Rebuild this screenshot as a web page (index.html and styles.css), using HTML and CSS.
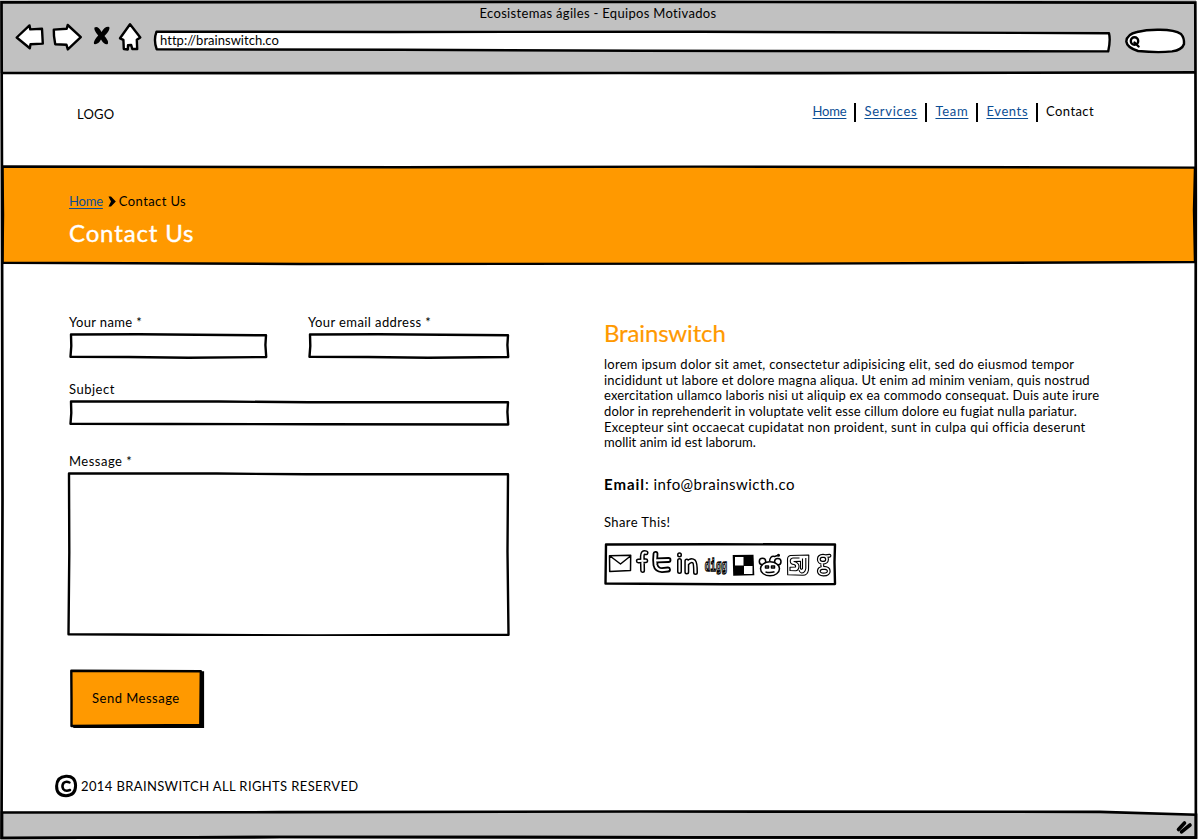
FILE: index.html
```
<!DOCTYPE html>
<html lang="es">
<head>
<meta charset="utf-8">
<title>Ecosistemas ágiles - Equipos Motivados</title>
<link rel="stylesheet" href="styles.css">
</head>
<body>
<div class="window">
  <header class="chrome">
    <div class="chrome-title"><span>Ecosistemas ágiles - Equipos Motivados</span></div>
    <div class="toolbar">
      <svg class="ink tool-back" width="30" height="30" viewBox="15 22 30 30"><path d="M16.7 37.5 29.5 25.4 30.3 29.4 42 28.7 42.8 43.6 30.5 44.2 29.8 48.2Z"/></svg>
      <svg class="ink tool-forward" width="32" height="30" viewBox="51 22 32 30"><path d="M53.8 29.6 66.7 28.8 67.7 25 80.8 37.2 67.8 49.4 66.5 44.8 55.2 44.2 54 36Z"/></svg>
      <svg class="tool-stop" width="20" height="30" viewBox="92 22 20 30"><path d="M94.500 27.500Q98 25.500 101.500 32 105 26 109.300 27 110.500 30 104.500 36 109 41 107.800 44 104.500 45.500 101 39.500 98 45 94 44 93 41 98.200 35.500 93.500 30 94.500 27.500Z"/></svg>
      <svg class="ink tool-home" width="26" height="30" viewBox="117 22 26 30"><path d="M120 38.3 130 24.2 140.3 37.4 136.8 39.8 137.2 49 132.3 49 131.2 45 128 45.3 127.8 49.5 123.8 49 123.4 39.8Z"/></svg>
      <div class="url">
        <svg class="ink frame" viewBox="153 29 960 24" preserveAspectRatio="none"><path d="M156.5 31.6 390 32 700 31.7 1109 33.2Q1110.700 40 1108.200 51.4L640 50.800 400 49.800 156.700 49.400Q153.300 40 156.500 31.600Z"/></svg>
        <span>http://brainswitch.co</span>
      </div>
      <svg class="ink tool-search" width="64" height="30" viewBox="1123 26 64 30"><path d="M1137 32Q1147 29.500 1160 29.800 1175 30 1181 34 1184.500 38 1184 44 1182 50 1172 51.400 1158 53 1138 51 1127 47.500 1126.300 41.500 1127 34 1137 32Z"/><circle cx="1134.500" cy="41" r="3.700"/><path d="M1134.500 42.500 1138.600 46.500" stroke-width="2.500"/></svg>
    </div>
  </header>

  <div class="site-head">
    <div class="logo"><span>LOGO</span></div>
    <nav class="nav">
      <a class="link" href="#">Home</a><i></i><a class="link services" href="#">Services</a><i></i><a class="link team" href="#">Team</a><i></i><a class="link events" href="#">Events</a><i></i><span>Contact</span>
    </nav>
  </div>

  <section class="banner">
    <svg class="ink frame" viewBox="0 164 1198 102" preserveAspectRatio="none"><path class="orange" d="M2.500 166.500 400 167.300 700 166.600 1195 167.600 1194 210 1195 262 800 263.600 300 264 2.500 262.800 3 215Z"/></svg>
    <div class="crumbs"><a class="link" href="#">Home</a><svg width="8" height="11" viewBox="0 0 8 11"><path d="M0.500 0.500 3 0.500 7.800 5.500 3 10.500 0.500 10.500 3 5.500Z"/></svg><span>Contact Us</span></div>
    <h1><span>Contact Us</span></h1>
  </section>

  <main class="content">
    <form class="form">
      <div class="pair">
        <div class="field name">
          <label><span>Your name *</span></label>
          <div class="box"><svg class="ink frame" viewBox="0 0 200 26" preserveAspectRatio="none"><path d="M2 1.500 70 1.300 198 2.300 197.400 12 198.200 24 120 24.700 60 24 1.500 23.700 2.300 13Z"/></svg></div>
        </div>
        <div class="field email">
          <label><span>Your email address *</span></label>
          <div class="box"><svg class="ink frame" viewBox="0 0 202 26" preserveAspectRatio="none"><path d="M2 1.500 70 1.300 200 2.300 199.400 12 200.200 24 120 24.700 60 24 1.500 23.700 2.300 13Z"/></svg></div>
        </div>
      </div>
      <div class="field subject">
        <label><span>Subject</span></label>
        <div class="box"><svg class="ink frame" viewBox="0 0 442 26" preserveAspectRatio="none"><path d="M2 1.500 150 1.500 240 2.300 440 2.300 439.400 12 440.200 24.500 250 24.200 100 24 1.500 23.700 2.300 13Z"/></svg></div>
      </div>
      <div class="field message">
        <label><span>Message *</span></label>
        <div class="box"><svg class="ink frame" viewBox="0 0 444 164" preserveAspectRatio="none"><path d="M2 1.500 150 1.500 240 2.300 442 2.300 441.500 80 442.500 162.700 250 163.400 100 162.800 1.500 162.300 2.300 80Z"/></svg></div>
      </div>
      <div class="send">
        <svg class="ink frame" viewBox="68 668 138 62" preserveAspectRatio="none"><path class="shadow" d="M74.500 672.500H202.900V726.900H74.500Z"/><path class="orange" d="M71.300 670.700 200.800 671.300 200.300 725 71.500 726 71.500 700Z"/></svg>
        <span>Send Message</span>
      </div>
    </form>

    <section class="about">
      <h2><span>Brainswitch</span></h2>
      <p class="lorem"><span>lorem ipsum dolor sit amet, consectetur adipisicing elit, sed do eiusmod tempor</span><br><span>incididunt ut labore et dolore magna aliqua. Ut enim ad minim veniam, quis nostrud</span><br><span>exercitation ullamco laboris nisi ut aliquip ex ea commodo consequat. Duis aute irure</span><br><span>dolor in reprehenderit in voluptate velit esse cillum dolore eu fugiat nulla pariatur.</span><br><span>Excepteur sint occaecat cupidatat non proident, sunt in culpa qui officia deserunt</span><br><span>mollit anim id est laborum.</span></p>
      <p class="mail"><b>Email</b><span>: info@brainswicth.co</span></p>
      <p class="share-label"><span>Share This!</span></p>
      <div class="share">
        <svg class="ink frame" viewBox="0 0 234 44" preserveAspectRatio="none"><path d="M3 2.500 110 2.200 232 2.500 231.500 20 232 42 120 42.300 2.500 41.500Z"/></svg>
        <svg class="thin" width="27" height="30" viewBox="607 549 27 30"><path d="M609.500 555.800 630.700 555.300 630.500 570.500 609.700 571.500Z M610 556 620.500 564 630.500 556"/></svg>
        <svg class="tube" width="16" height="30" viewBox="634 549 16 30"><g id="f"><path d="M646 552.800Q642.300 551.500 642.300 556.500L642.600 570.500M638.300 561 645.800 560.700"/></g><use href="#f" class="core"/></svg>
        <svg class="tube heavy" width="25" height="30" viewBox="650 549 25 30"><g id="t"><path d="M655.500 553.800Q654.800 560 655.500 565 656.500 569.800 662 570.200L668 569.500M657 560.300 668.500 560"/></g><use href="#t" class="core"/></svg>
        <svg class="tube" width="27" height="30" viewBox="675 549 27 30"><g id="in"><path d="M679.500 554.800V555M679.500 560.500V571.500M686.800 572V561M687 563.500Q691 559 694 561.500 695.500 563 695.500 572.500"/></g><use href="#in" class="core"/></svg>
        <svg class="digg" width="29" height="30" viewBox="702 549 29 30"><text transform="translate(704.700 571) scale(1 1.700)">digg</text></svg>
        <svg width="26" height="30" viewBox="731 549 26 30"><path d="M732.700 555 753.500 554.800 754.300 575.200 733.200 575.800Z"/><path d="M735 557H743.500V565.500H735ZM744 566H752.500V574H744Z" fill="#fff"/></svg>
        <svg class="thin" width="28" height="30" viewBox="757 549 28 30"><circle cx="762.500" cy="561.500" r="3.200"/><circle cx="777.800" cy="561.800" r="3.200"/><ellipse cx="770" cy="568.800" rx="9.500" ry="7"/><path d="M769.500 561.500Q770 555.500 774.500 556.500L777.500 555.500M765.500 566H768.500V568H765.500ZM771.500 566H774.500V568H771.500ZM765.500 572Q770 573.200 774.500 571.800"/><circle cx="778.500" cy="555.200" r="0.800"/></svg>
        <svg class="thin su" width="29" height="30" viewBox="785 549 29 30"><path d="M790.500 555.500 808.800 555 808.500 570Q807.500 575.300 803 575.300L787.700 574.800 787.500 559.500Q787.500 556 790.500 555.500Z"/><path d="M799.500 558H793Q790 558.500 790.300 561.500 790.500 564.300 794 564.500 796 565 795.500 567L790 567.200V570.500L796 570.800Q799 570 799 566 798.500 562.500 794 561.500L800.500 561.200V568.500Q801 570 802.500 568.500V558.500M805.800 558V568.500Q805 573 801.500 573 799.500 572.500 799 570"/></svg>
        <svg class="tube fine" width="19" height="30" viewBox="814 549 19 30"><g id="g"><path d="M829.500 555.800 825.500 556.200M823 555.800C817.500 556 817.500 562.500 822.500 562.800 828.500 563 828.500 556 823 555.800ZM822 563.500 822.500 567M823.500 567.800C817.500 568 817 574.300 823.500 574.500 830.500 574.300 830.500 568 823.500 567.800Z"/></g><use href="#g" class="core"/></svg>
      </div>
    </section>
  </main>

  <footer class="copyright">
    <svg width="24" height="24" viewBox="54 774 24 24"><path d="M66 776.300Q75.300 775.800 75.600 785.500 75.500 795.500 66 795.700 56.500 795.500 56.600 786 57 776.800 66 776.300Z" fill="none" stroke="#000" stroke-width="3"/><path d="M69.500 782.500Q66 780.800 63.500 783 61.500 786 63.200 789 65.500 791.800 70 790" fill="none" stroke="#000" stroke-width="2.500" stroke-linecap="round"/></svg>
    <span>2014 BRAINSWITCH ALL RIGHTS RESERVED</span>
  </footer>

  <svg class="window-frame" viewBox="0 0 1198 840">
    <path class="bar" d="M2 812.500 280 812.200 640 811.500 1100 811.800 1196 814.700V837.500L700 837.300 280 837 2 838Z"/>
    <path d="M2 73 300 73.200 620 73 820 73.200 1196 72.300"/>
    <path d="M1.500 2.300 600 1.800 1195.300 2.600 1195.800 200 1195.500 500 1195.900 837.700 700 837.400 280 837 1.500 838 2.500 500 2 200Z"/>
    <path class="grip" d="M1178.500 829.500 1184.500 823M1181.500 831.800 1190 825"/>
  </svg>
</div>
</body>
</html>
```
FILE: styles.css
```
* { box-sizing: border-box; }

body {
  margin: 0;
  background: #fff;
  color: #000;
  font: 13px/16px Lato, "Open Sans", sans-serif;
  font-variant-ligatures: none;
  letter-spacing: 0.4px;
}

h1, h2, p { margin: 0; font-weight: 400; }

.window {
  position: relative;
  width: 1198px;
  height: 840px;
  overflow: hidden;
  display: flex;
  flex-direction: column;
  white-space: nowrap;
}

svg { display: block; flex: none; }
.ink path, .ink circle { fill: #fff; stroke: #000; stroke-width: 2.4; stroke-linejoin: round; stroke-linecap: round; }
.ink path.orange { fill: #ff9900; }
.ink path.shadow { fill: #000; stroke-linejoin: miter; }
.frame { position: absolute; inset: 0; width: 100%; height: 100%; }

.window-frame { position: absolute; inset: 0; width: 1198px; height: 840px; pointer-events: none; }
.window-frame path { fill: none; stroke: #000; stroke-width: 2.7; }
.window-frame .bar { fill: #c1c1c1; }
.window-frame .grip { stroke-width: 3.6; stroke-linecap: round; }

/* browser bar */
.chrome { height: 73px; width: 1196px; background: #c1c1c1; padding-top: 5px; }
.chrome-title { text-align: center; height: 17px; letter-spacing: 0.32px; }
.toolbar { display: flex; padding-left: 15px; }
.tool-forward { margin-left: 6px; }
.tool-stop { margin-left: 9px; }
.tool-home { margin-left: 5px; }
.url { position: relative; width: 960px; height: 24px; margin: 7px 0 0 10px; padding: 3px 7px; letter-spacing: 0.03px; }
.url span { position: relative; }
.tool-search { margin: 4px 0 0 10px; }

/* site header */
.site-head { height: 91px; display: flex; justify-content: space-between; padding: 30px 104px 0 77px; }
.logo { padding-top: 3px; letter-spacing: 0.2px; }
.nav { display: flex; }
.nav i { width: 2px; height: 19px; background: #000; margin: 0 8px; }
.link { color: #0b4d94; letter-spacing: -0.2px; text-decoration: underline; text-decoration-thickness: 1px; text-underline-offset: 2px; }
.services { letter-spacing: 0.75px; }
.team { letter-spacing: 0.72px; }
.events { letter-spacing: 0.6px; }

.banner { position: relative; height: 102px; padding: 29px 0 0 69px; }
.crumbs { position: relative; display: flex; align-items: center; height: 16px; }
.crumbs svg { margin: 1px 3px 0 5px; }
.banner h1 { position: relative; color: #fff; font-size: 24px; line-height: 30px; margin-top: 9px; letter-spacing: 0.85px; -webkit-text-stroke: 0.4px #fff; }

/* contact form and company details */
.content { display: flex; height: 506px; }
.form { width: 604px; padding: 48px 0 0 69px; }
.pair { display: flex; gap: 40px; }
.box { position: relative; height: 26px; margin-top: 3px; }
.name { width: 199px; letter-spacing: 0.35px; }
.email { width: 202px; }
.field label { display: block; height: 16px; }
.subject { width: 441px; margin-top: 22px; letter-spacing: 0.5px; }
.message { width: 441px; margin-top: 27px; letter-spacing: 0.5px; }
.message .box { width: 443px; height: 164px; margin-left: -2px; }
.send { position: relative; width: 138px; height: 62px; margin: 32px 0 0 -1px; padding: 22px 0 0 24px; letter-spacing: 0.5px; }
.send span { position: relative; }

.about h2 { color: #ff9900; font-size: 24px; line-height: 30px; margin-top: 52px; letter-spacing: -0.15px; -webkit-text-stroke: 0.2px #ff9900; }
.lorem { margin-top: 9.3px; line-height: 15.6px; letter-spacing: 0.18px; }
.lorem span:nth-of-type(1) { letter-spacing: 0.27px; }
.lorem span:nth-of-type(4) { letter-spacing: 0.13px; }
.lorem span:nth-of-type(5) { letter-spacing: 0.27px; }
.lorem span:nth-of-type(6) { letter-spacing: 0.06px; }
.mail { margin-top: 22.7px; font-size: 15px; line-height: 20px; letter-spacing: 0.45px; }
.mail b { letter-spacing: 0.95px; }
.share-label { margin-top: 20px; }
.share { position: relative; display: flex; width: 234px; height: 44px; margin: 12px 0 0 -1px; padding: 7px 0 0 4px; }
.share > svg:not(.frame) { position: relative; }
.thin { fill: #fff; stroke: #000; stroke-width: 1.5; stroke-linejoin: round; }
.su { stroke-width: 1.1; }
.tube { fill: none; stroke: #000; stroke-width: 5; stroke-linecap: round; stroke-linejoin: round; }
.tube .core { stroke: #fff; stroke-width: 2; }
.heavy { stroke-width: 5.8; }
.heavy .core { stroke-width: 2.2; }
.fine { stroke-width: 3.9; }
.fine .core { stroke-width: 1.6; }
.digg { font: bold 9.3px "DejaVu Sans Mono", monospace; letter-spacing: 0; fill: #fff; stroke: #000; stroke-width: 0.8; }

.copyright { display: flex; align-items: center; height: 32px; padding-left: 54px; gap: 3px; letter-spacing: 0.38px; }
.copyright span { margin-top: -5px; }
.copyright svg { margin-top: -4px; }
```
